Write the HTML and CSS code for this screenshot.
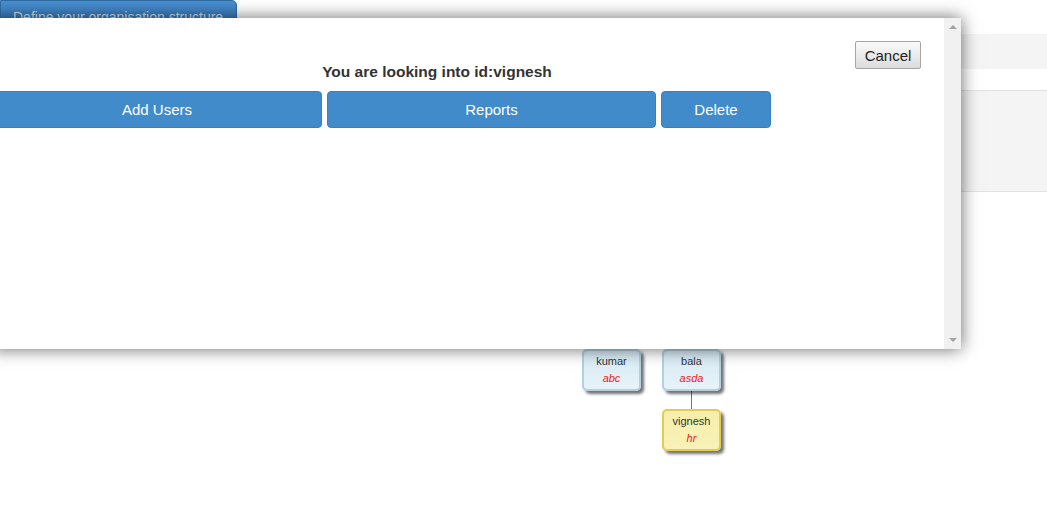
FILE: index.html
```html
<!DOCTYPE html>
<html>
<head>
<meta charset="utf-8">
<link rel="stylesheet" href="styles.css">
</head>
<body>
<div class="page">
  <div class="topbar">
    <button class="define-btn">Define your organisation structure</button>
  </div>
  <div class="band"></div>
  <div class="gap"></div>
  <div class="panel"></div>
  <div class="chart">
    <div class="link up" style="left:611px;top:100px;height:57px"></div>
    <div class="link up" style="left:691px;top:100px;height:57px"></div>
    <div class="link" style="left:691px;top:199px;height:18px"></div>
    <div class="node blue" style="left:582px;top:157px">
      <span class="name">kumar</span>
      <span class="role">abc</span>
    </div>
    <div class="node blue" style="left:662px;top:157px">
      <span class="name">bala</span>
      <span class="role">asda</span>
    </div>
    <div class="node yellow" style="left:662px;top:217px">
      <span class="name">vignesh</span>
      <span class="role">hr</span>
    </div>
  </div>
</div>

<div class="dialog">
  <div class="dialog-content">
    <div class="dialog-head">
      <h3 class="dialog-title">You are looking into id:vignesh</h3>
      <button class="cancel-btn">Cancel</button>
    </div>
    <div class="actions">
      <button class="action wide">Add Users</button>
      <button class="action mid">Reports</button>
      <button class="action narrow">Delete</button>
    </div>
  </div>
  <div class="scrollbar">
    <span class="arrow arrow-up"></span>
    <span class="arrow arrow-down"></span>
  </div>
</div>
</body>
</html>
```

FILE: styles.css
```css
html, body {
  margin: 0;
  padding: 0;
  background: #fff;
  font-family: "Liberation Sans", Arial, sans-serif;
  width: 1047px;
  height: 509px;
  overflow: hidden;
  position: relative;
}

.page {
  display: flex;
  flex-direction: column;
}

.topbar {
  height: 34px;
}

.define-btn {
  display: block;
  height: 30px;
  margin: 0;
  padding: 4px 13px 0 12px;
  border: 1px solid #2e6da4;
  border-radius: 0 5px 4px 4px;
  background: linear-gradient(#4a8fd0, #2f72b4);
  color: #dbe6f1;
  font-family: "Liberation Sans", Arial, sans-serif;
  font-size: 14px;
  line-height: 20px;
  text-align: left;
}

.band {
  height: 35px;
  background: #f4f4f4;
}

.gap {
  height: 21px;
}

.panel {
  height: 100px;
  background: #f4f4f4;
  border-top: 1px solid #e2e2e2;
  border-bottom: 1px solid #e2e2e2;
}

.chart {
  position: relative;
  height: 316px;
}

.link {
  position: absolute;
  width: 1px;
  background: #4a7fb0;
}

.link.up {
  background: #333;
}

.node {
  position: absolute;
  box-sizing: border-box;
  width: 59px;
  height: 42px;
  border-radius: 5px;
  border: 2px solid #b2d0e0;
  box-shadow: 3px 3px 3px rgba(0, 0, 0, 0.55);
  display: flex;
  flex-direction: column;
  align-items: center;
  font-size: 11px;
  line-height: 14px;
  padding-top: 3px;
  gap: 3px;
}

.node.blue {
  background: linear-gradient(#d8ebf5, #e6f2f8);
}

.node.yellow {
  border-color: #e2cc56;
  background: linear-gradient(#f6eeaa, #f8f2b8);
}

.node .name {
  color: #333;
}

.node .role {
  color: #f01818;
  font-style: italic;
}

.dialog {
  position: absolute;
  left: -8px;
  top: 18px;
  width: 969px;
  height: 331px;
  display: flex;
  background: #fff;
  box-shadow: 0 0 16px rgba(0, 0, 0, 0.6);
}

.dialog-content {
  flex: 1;
  display: flex;
  flex-direction: column;
  padding-top: 23px;
}

.dialog-head {
  display: flex;
  align-items: flex-start;
  padding-right: 23px;
}

.dialog-title {
  flex: 1;
  margin: 22px 0 0 0;
  padding-left: 27px;
  text-align: center;
  font-size: 15.5px;
  line-height: 18px;
  font-weight: bold;
  color: #333;
}

.cancel-btn {
  width: 66px;
  height: 28px;
  margin: 0;
  padding: 0;
  border: 1px solid #a6a6a6;
  border-radius: 2px;
  background: linear-gradient(#fafafa, #dcdcdc);
  color: #222;
  font-family: "Liberation Sans", Arial, sans-serif;
  font-size: 15px;
}

.actions {
  display: flex;
  gap: 5px;
  margin-top: 10px;
}

.action {
  height: 37px;
  margin: 0;
  padding: 0;
  border: 1px solid #3a80bf;
  border-radius: 4px;
  background: #418bca;
  color: #fff;
  font-family: "Liberation Sans", Arial, sans-serif;
  font-size: 15px;
}

.action.wide {
  width: 330px;
}

.action.mid {
  width: 329px;
}

.action.narrow {
  width: 110px;
}

.scrollbar {
  width: 17px;
  background: #f1f1f1;
  display: flex;
  flex-direction: column;
  justify-content: space-between;
  align-items: center;
  padding: 7px 0;
  box-sizing: border-box;
}

.arrow {
  width: 0;
  height: 0;
  border-left: 4px solid transparent;
  border-right: 4px solid transparent;
}

.arrow-up {
  border-bottom: 4px solid #a3a3a3;
}

.arrow-down {
  border-top: 4px solid #a3a3a3;
}
```
